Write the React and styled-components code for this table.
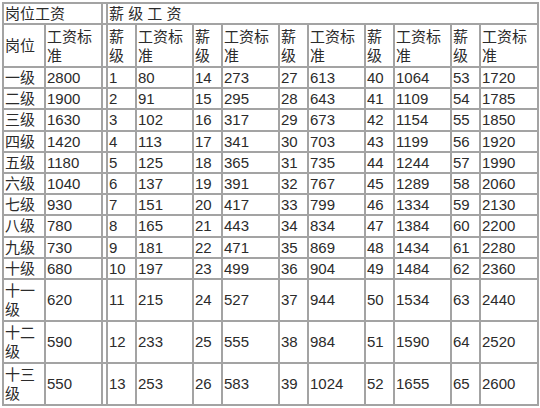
import React from "react";
import styled, { createGlobalStyle } from "styled-components";

const GlobalStyle = createGlobalStyle`
  html, body {
    margin: 0;
    padding: 0;
    background: #ffffff;
  }
  body {
    font-family: "Liberation Sans", "Noto Sans CJK SC", sans-serif;
    color: #2b2b2b;
  }
`;

const Page = styled.div`
  padding: 2px 0 0 2px;
`;

const Table = styled.table`
  border-collapse: collapse;
  table-layout: fixed;
  width: 535px;
  font-size: 15px;
  line-height: 19px;
`;

const Row = styled.tr`
  height: ${(p) => p.$h}px;
`;

const Cell = styled.td`
  border: 2px solid #a3a3a3;
  padding: 0 0 0 1px;
  vertical-align: middle;
  white-space: normal;
  word-break: break-all;
  overflow: hidden;
`;

const Spacer = styled.td`
  border: 2px solid #a3a3a3;
  padding: 0;
`;

const widths = [42, 57, 5, 29, 57, 29, 57, 29, 57, 29, 57, 29, 58];

const posts = [
  ["一级", 2800],
  ["二级", 1900],
  ["三级", 1630],
  ["四级", 1420],
  ["五级", 1180],
  ["六级", 1040],
  ["七级", 930],
  ["八级", 780],
  ["九级", 730],
  ["十级", 680],
  ["十一级", 620],
  ["十二级", 590],
  ["十三级", 550],
];

const pay = [
  80, 91, 102, 113, 125, 137, 151, 165, 181, 197, 215, 233, 253,
  273, 295, 317, 341, 365, 391, 417, 443, 471, 499, 527, 555, 583,
  613, 643, 673, 703, 735, 767, 799, 834, 869, 904, 944, 984, 1024,
  1064, 1109, 1154, 1199, 1244, 1289, 1334, 1384, 1434, 1484, 1534, 1590, 1655,
  1720, 1785, 1850, 1920, 1990, 2060, 2130, 2200, 2280, 2360, 2440, 2520, 2600,
];

export default function App() {
  return (
    <Page>
      <GlobalStyle />
      <Table>
        <colgroup>
          {widths.map((w, i) => (
            <col key={i} style={{ width: w }} />
          ))}
        </colgroup>
        <tbody>
          <Row $h={21}>
            <Cell colSpan={2}>岗位工资</Cell>
            <Spacer />
            <Cell colSpan={10}>薪 级 工 资</Cell>
          </Row>
          <Row $h={43}>
            <Cell>岗位</Cell>
            <Cell>工资标准</Cell>
            <Spacer />
            {[0, 1, 2, 3, 4].map((g) => (
              <React.Fragment key={g}>
                <Cell>薪级</Cell>
                <Cell>工资标准</Cell>
              </React.Fragment>
            ))}
          </Row>
          {posts.map(([name, amount], r) => (
            <Row key={name} $h={r < 10 ? 21.2 : 42}>
              <Cell>{name}</Cell>
              <Cell>{amount}</Cell>
              <Spacer />
              {[0, 1, 2, 3, 4].map((g) => {
                const lvl = g * 13 + r + 1;
                return (
                  <React.Fragment key={g}>
                    <Cell>{lvl}</Cell>
                    <Cell>{pay[lvl - 1]}</Cell>
                  </React.Fragment>
                );
              })}
            </Row>
          ))}
        </tbody>
      </Table>
    </Page>
  );
}
